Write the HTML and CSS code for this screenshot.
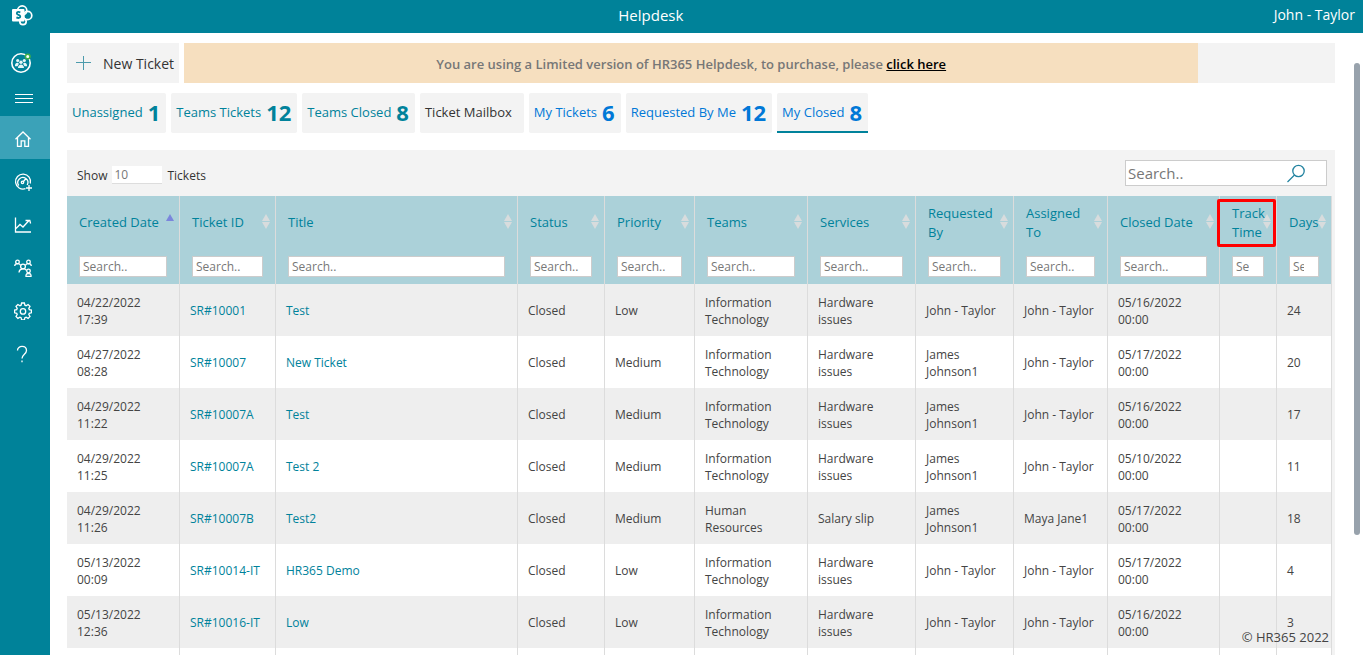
FILE: index.html
```html
<!DOCTYPE html>
<html lang="en">
<head>
<meta charset="utf-8">
<title>Helpdesk</title>
<link rel="stylesheet" href="styles.css">
</head>
<body>
<header class="topbar">
  <a class="app-logo" href="#" aria-label="SharePoint">
    <svg width="24" height="24" viewBox="0 0 24 24" fill="none" stroke="#fff" stroke-width="1.700">
      <circle cx="12.200" cy="7.500" r="4.600"/><circle cx="17.600" cy="12.500" r="4.200"/><circle cx="13" cy="18.500" r="3.200"/>
      <rect x="2" y="6" width="12.500" height="12.500" rx="1" fill="#fff" stroke="none"/>
      <path d="M10.300 9.400c-1.300-.8-3.500-.8-3.500.8 0 2 3.500 1.300 3.500 3.300 0 1.800-2.300 1.800-3.900.9" stroke="#008299" stroke-width="1.800"/>
    </svg>
  </a>
  <h1 class="topbar-title">Helpdesk</h1>
  <span class="user">John - Taylor</span>
</header>
<div class="shell">
  <nav class="sidebar" aria-label="Main">
    <a class="brand" href="#" aria-label="HR365">
      <svg width="24" height="24" viewBox="0 0 24 24" fill="none">
        <circle cx="12" cy="13" r="9.200" stroke="#fff" stroke-width="1.600"/>
        <g fill="#e8f6f8"><circle cx="8.700" cy="10.500" r="1.600"/><circle cx="15.300" cy="10.500" r="1.600"/><circle cx="12" cy="12.300" r="1.700"/><path d="M6 15.500c0-3.500 3.800-3.500 3.800-1.500L8.500 16.300H6zM18 15.500c0-3.500-3.800-3.500-3.800-1.500l1.300 2.300H18zM9 18c0-4.800 6-4.800 6 0z"/></g>
        <circle cx="18.700" cy="6.500" r="2.300" fill="#fff" stroke="#3fae49" stroke-width="1.600"/>
      </svg>
    </a>
    <button class="menu-toggle" type="button" aria-label="Toggle menu">
      <svg width="18" height="11" viewBox="0 0 18 11" fill="#fff"><path d="M0 1h18v1H0zM0 5h18v1H0zM0 9h18v1H0z"/></svg>
    </button>
    <a class="nav-item nav-item-active" href="#" aria-label="Home">
      <svg width="18" height="18" viewBox="0 0 18 18" fill="none" stroke="#fff" stroke-width="1.300"><path d="M1.500 9.200 9 2l7.500 7.200M3.500 7.500v8.800h3.700v-5.500h3.600v5.500h3.700V7.500"/></svg>
    </a>
    <a class="nav-item" href="#" aria-label="Dashboard">
      <svg width="18" height="18" viewBox="0 0 18 18" fill="none" stroke="#fff" stroke-width="1.300"><path d="M11.500 15.700a7.500 7.500 0 1 1 4.800-5.200M4.800 12.500a5 5 0 1 1 8.400-.5M12 5.500 9 9"/><circle cx="8.500" cy="9.300" r="1.200"/><path d="M15 12v6M12 15h6"/></svg>
    </a>
    <a class="nav-item" href="#" aria-label="Reports">
      <svg width="18" height="18" viewBox="0 0 18 18" fill="none" stroke="#fff" stroke-width="1.300"><path d="M1.500 1.500v14.500H17M2 12.500 6 8.500l3 2.500 6-6.500M11.500 4.500h4.300l.8 3"/></svg>
    </a>
    <a class="nav-item" href="#" aria-label="Teams">
      <svg width="18" height="18" viewBox="0 0 18 18" fill="none" stroke="#fff" stroke-width="1.300"><circle cx="3.500" cy="3" r="1.800"/><circle cx="14.500" cy="3" r="1.800"/><circle cx="9" cy="7.500" r="2.400"/><circle cx="14.500" cy="12" r="1.800"/><path d="M.7 7c.2-3 4.800-3 5.800-.8M17.300 7c-.2-3-4.800-3-5.800-.8M5 13.500c.3-4.500 6.500-4.500 7.500-2M12 17.500v-1.500c.3-2 4.700-2 5 0v1.500z"/></svg>
    </a>
    <a class="nav-item" href="#" aria-label="Settings">
      <svg width="18" height="18" viewBox="0 0 18 18" fill="none" stroke="#fff" stroke-width="1.300"><path d="M7.600 1h2.800l.5 2.200 1.200.5 2-1.200 1.900 1.900-1.200 2 .5 1.200 2.100.5v2.700l-2.100.5-.5 1.200 1.200 2-1.900 1.900-2-1.200-1.200.5-.5 2.200H7.600l-.5-2.200-1.200-.5-2 1.200L2 14.500l1.200-2-.5-1.200-2.100-.5V8.100l2.100-.5.5-1.200-1.200-2 1.900-1.900 2 1.200 1.200-.5z"/><circle cx="9" cy="9.400" r="2.700"/></svg>
    </a>
    <a class="nav-item" href="#" aria-label="Help">
      <svg width="18" height="18" viewBox="0 0 18 18" fill="none" stroke="#fff" stroke-width="1.300"><path d="M3.500 5.500C3.500 0 12.500 0 12.500 5.500c0 3.500-4.500 4-4.500 8M8 15.500v1.700"/></svg>
    </a>
  </nav>
  <main class="content">
    <div class="action-row">
      <button class="new-ticket" type="button">
        <svg width="16" height="16" viewBox="0 0 16 16" fill="none" stroke="#4c9bac"><path d="M7.500 1v14M0 7.500h15"/></svg>
        New Ticket
      </button>
      <p class="notice">You are using a Limited version of HR365 Helpdesk, to purchase, please <a class="notice-link" href="#">click here</a></p>
    </div>
    <nav class="tabs" aria-label="Ticket lists">
      <a class="tab tab-teal" href="#">Unassigned <b class="count">1</b></a>
      <a class="tab tab-teal" href="#">Teams Tickets <b class="count">12</b></a>
      <a class="tab tab-teal" href="#">Teams Closed <b class="count">8</b></a>
      <a class="tab tab-plain" href="#">Ticket Mailbox</a>
      <a class="tab" href="#">My Tickets <b class="count">6</b></a>
      <a class="tab" href="#">Requested By Me <b class="count">12</b></a>
      <a class="tab tab-active" href="#">My Closed <b class="count">8</b></a>
    </nav>
    <section class="panel">
      <div class="panel-tools">
        <label class="page-size">Show <input class="page-size-input" type="text" value="10"> Tickets</label>
        <div class="search">
          <input class="search-input" type="text" placeholder="Search.." aria-label="Search tickets">
          <svg class="search-icon" width="20" height="20" viewBox="0 0 20 20" fill="none" stroke="#2383a0" stroke-width="1.300"><circle cx="12.500" cy="7" r="5.700"/><path d="M8.500 11 1.500 18"/></svg>
        </div>
      </div>
      <table class="tickets">
        <colgroup><col class="w-date"><col class="w-id"><col><col class="w-status"><col class="w-priority"><col class="w-teams"><col class="w-services"><col class="w-requested"><col class="w-assigned"><col class="w-closed"><col class="w-track"><col class="w-days"></colgroup>
        <thead>
          <tr class="labels">
            <th class="sorted">Created Date</th><th>Ticket ID</th><th>Title</th><th>Status</th><th>Priority</th><th>Teams</th><th>Services</th><th>Requested By</th><th>Assigned To</th><th>Closed Date</th><th>Track Time<span class="marker"></span></th><th>Days</th>
          </tr>
          <tr class="filters">
            <td><input class="filter" type="text" placeholder="Search.." aria-label="Filter created date"></td>
            <td><input class="filter" type="text" placeholder="Search.." aria-label="Filter ticket ID"></td>
            <td><input class="filter" type="text" placeholder="Search.." aria-label="Filter title"></td>
            <td><input class="filter" type="text" placeholder="Search.." aria-label="Filter status"></td>
            <td><input class="filter" type="text" placeholder="Search.." aria-label="Filter priority"></td>
            <td><input class="filter" type="text" placeholder="Search.." aria-label="Filter teams"></td>
            <td><input class="filter" type="text" placeholder="Search.." aria-label="Filter services"></td>
            <td><input class="filter" type="text" placeholder="Search.." aria-label="Filter requested by"></td>
            <td><input class="filter" type="text" placeholder="Search.." aria-label="Filter assigned to"></td>
            <td><input class="filter" type="text" placeholder="Search.." aria-label="Filter closed date"></td>
            <td><input class="filter filter-narrow" type="text" placeholder="Search.." aria-label="Filter track time"></td>
            <td><input class="filter filter-narrow" type="text" placeholder="Search.." aria-label="Filter days"></td>
          </tr>
        </thead>
        <tbody>
          <tr><td>04/22/2022 17:39</td><td><a href="#">SR#10001</a></td><td><a href="#">Test</a></td><td>Closed</td><td>Low</td><td>Information Technology</td><td>Hardware issues</td><td>John - Taylor</td><td>John - Taylor</td><td>05/16/2022 00:00</td><td></td><td>24</td></tr>
          <tr><td>04/27/2022 08:28</td><td><a href="#">SR#10007</a></td><td><a href="#">New Ticket</a></td><td>Closed</td><td>Medium</td><td>Information Technology</td><td>Hardware issues</td><td>James Johnson1</td><td>John - Taylor</td><td>05/17/2022 00:00</td><td></td><td>20</td></tr>
          <tr><td>04/29/2022 11:22</td><td><a href="#">SR#10007A</a></td><td><a href="#">Test</a></td><td>Closed</td><td>Medium</td><td>Information Technology</td><td>Hardware issues</td><td>James Johnson1</td><td>John - Taylor</td><td>05/16/2022 00:00</td><td></td><td>17</td></tr>
          <tr><td>04/29/2022 11:25</td><td><a href="#">SR#10007A</a></td><td><a href="#">Test 2</a></td><td>Closed</td><td>Medium</td><td>Information Technology</td><td>Hardware issues</td><td>James Johnson1</td><td>John - Taylor</td><td>05/10/2022 00:00</td><td></td><td>11</td></tr>
          <tr><td>04/29/2022 11:26</td><td><a href="#">SR#10007B</a></td><td><a href="#">Test2</a></td><td>Closed</td><td>Medium</td><td>Human Resources</td><td>Salary slip</td><td>James Johnson1</td><td>Maya Jane1</td><td>05/17/2022 00:00</td><td></td><td>18</td></tr>
          <tr><td>05/13/2022 00:09</td><td><a href="#">SR#10014-IT</a></td><td><a href="#">HR365 Demo</a></td><td>Closed</td><td>Low</td><td>Information Technology</td><td>Hardware issues</td><td>John - Taylor</td><td>John - Taylor</td><td>05/17/2022 00:00</td><td></td><td>4</td></tr>
          <tr><td>05/13/2022 12:36</td><td><a href="#">SR#10016-IT</a></td><td><a href="#">Low</a></td><td>Closed</td><td>Low</td><td>Information Technology</td><td>Hardware issues</td><td>John - Taylor</td><td>John - Taylor</td><td>05/16/2022 00:00</td><td></td><td>3</td></tr>
          <tr><td></td><td></td><td></td><td></td><td></td><td></td><td></td><td></td><td></td><td></td><td></td><td></td></tr>
        </tbody>
      </table>
    </section>
    <div class="scroll-thumb"></div>
    <footer class="copyright">© HR365 2022</footer>
  </main>
</div>
</body>
</html>
```
FILE: styles.css
```css
* { box-sizing: border-box; }
body {
  margin: 0;
  height: 100vh;
  display: flex;
  flex-direction: column;
  overflow: hidden;
  font-family: "Open Sans", "Noto Sans", sans-serif;
  font-size: 12px;
  color: #333;
  background: #fff;
}
a { color: #00829b; text-decoration: none; }
button, input { font: inherit; color: inherit; border: 0; border-radius: 0; }
svg { flex: none; display: block; }

.topbar {
  display: flex;
  align-items: center;
  flex: none;
  height: 33px;
  padding-bottom: 4px;
  background: #008299;
  color: #fff;
}
.app-logo { width: 50px; padding-left: 10px; }
.topbar-title { flex: 1; margin: 0; font-size: 15px; font-weight: 400; line-height: 20px; text-align: center; }
.user { padding: 0 8px 0 22px; font-size: 14px; }

.shell { display: flex; flex: 1; min-height: 0; }
.sidebar {
  display: flex;
  flex-direction: column;
  flex: none;
  width: 50px;
  padding-top: 11px;
  background: #008299;
}
.brand, .menu-toggle, .nav-item { display: flex; align-items: center; width: 50px; }
.brand { height: 36px; padding-left: 9px; }
.menu-toggle { height: 36px; padding: 0 0 0 15px; background: none; }
.nav-item { height: 43px; padding: 3px 0 0 14px; }
.nav-item-active { background: #3ba2b8; }

.content { position: relative; flex: 1; min-width: 0; padding: 10px 28px 0 17px; overflow: hidden; }

.action-row { display: flex; height: 40px; background: #f3f3f3; }
.new-ticket {
  display: flex;
  align-items: center;
  gap: 11px;
  flex: none;
  width: 117px;
  padding: 0 0 0 9px;
  border-right: 5px solid #fff;
  background: #f3f3f3;
  font-size: 14px;
  white-space: nowrap;
}
.notice {
  flex: 0 0 80%;
  margin: 0;
  background: #f6dfbf;
  color: #777;
  font-size: 13px;
  font-weight: 600;
  line-height: 42px;
  text-align: center;
}
.notice-link { color: #000; text-decoration: underline; }

.tabs { display: flex; gap: 5px; margin: 10px 0 17px; }
.tab {
  display: flex;
  align-items: center;
  gap: 5px;
  height: 40px;
  padding: 0 6px 0 5px;
  border-bottom: 2px solid #f3f3f3;
  border-radius: 2px;
  background: #f3f3f3;
  color: #0078d7;
  font-size: 13px;
  white-space: nowrap;
}
.tab-teal { color: #00829b; }
.tab-plain { padding-right: 12px; color: #333; }
.tab-active { border-bottom-color: #00829b; border-radius: 2px 2px 0 0; }
.count { font-size: 22px; font-weight: 700; }

.panel { padding-right: 3px; background: #f3f3f3; }
.panel-tools {
  display: flex;
  align-items: center;
  justify-content: space-between;
  height: 46px;
  padding: 0 5px 0 10px;
}
.page-size { display: flex; align-items: center; gap: 5px; padding-top: 4px; }
.page-size-input { width: 50px; height: 18px; padding: 0 2px; border-bottom: 1px solid #ddd; background: #fff; color: #777; }
.search { position: relative; width: 202px; }
.search-input { display: block; width: 100%; height: 26px; padding: 0 2px; border: 1px solid #ccc; background: #fff; font-size: 15px; }
.search-icon { position: absolute; top: 4px; right: 21px; }
::placeholder { color: #777; opacity: 1; }

.tickets { width: 100%; table-layout: fixed; border-collapse: separate; border-spacing: 0; }
.w-date, .w-teams { width: 113px; }
.w-id { width: 96px; }
.w-status { width: 87px; }
.w-priority { width: 90px; }
.w-services { width: 108px; }
.w-requested { width: 98px; }
.w-assigned { width: 94px; }
.w-closed { width: 112px; }
.w-track { width: 57px; }
.w-days { width: 55px; }

.tickets th, .tickets td { border-right: 1px solid #dcdcdc; text-align: left; vertical-align: middle; }
.tickets thead { background: #abd1d9; }
.tickets th {
  position: relative;
  height: 53px;
  padding: 0 17px 0 12px;
  color: #00829b;
  font-size: 13px;
  font-weight: 400;
  line-height: 19px;
}
.tickets th::before, .tickets th::after {
  content: "";
  position: absolute;
  right: 5px;
  border: 4px solid transparent;
}
.tickets th::before { top: 14px; border-bottom: 7px solid #d8dcdd; }
.tickets th::after { top: 26px; border-top: 7px solid #d8dcdd; }
.tickets .sorted::before { border-bottom-color: #7b86dc; }
.tickets .sorted::after { display: none; }
.marker { position: absolute; inset: 3px 0 2px -3px; border: 3px solid #f00; border-radius: 2px; }
.tickets .filters td { height: 35px; padding: 0 12px; }
.filter { display: block; width: 100%; height: 21px; padding: 0 3px; border: 1px solid #ccc; background: #fff; }
.filter-narrow { padding-right: 14px; }

.tickets tbody td { height: 52px; padding: 1px 10px 0; color: #444; line-height: 17px; }
.tickets tbody tr { background: #fff; }
.tickets tbody tr:nth-child(odd) { background: #eee; }

.scroll-thumb { position: absolute; top: 30px; right: 3px; width: 6px; height: 472px; border-radius: 3px; background: #98a2ac; }
.copyright { position: absolute; right: 34px; bottom: 9px; font-size: 13px; color: #444; }
```
